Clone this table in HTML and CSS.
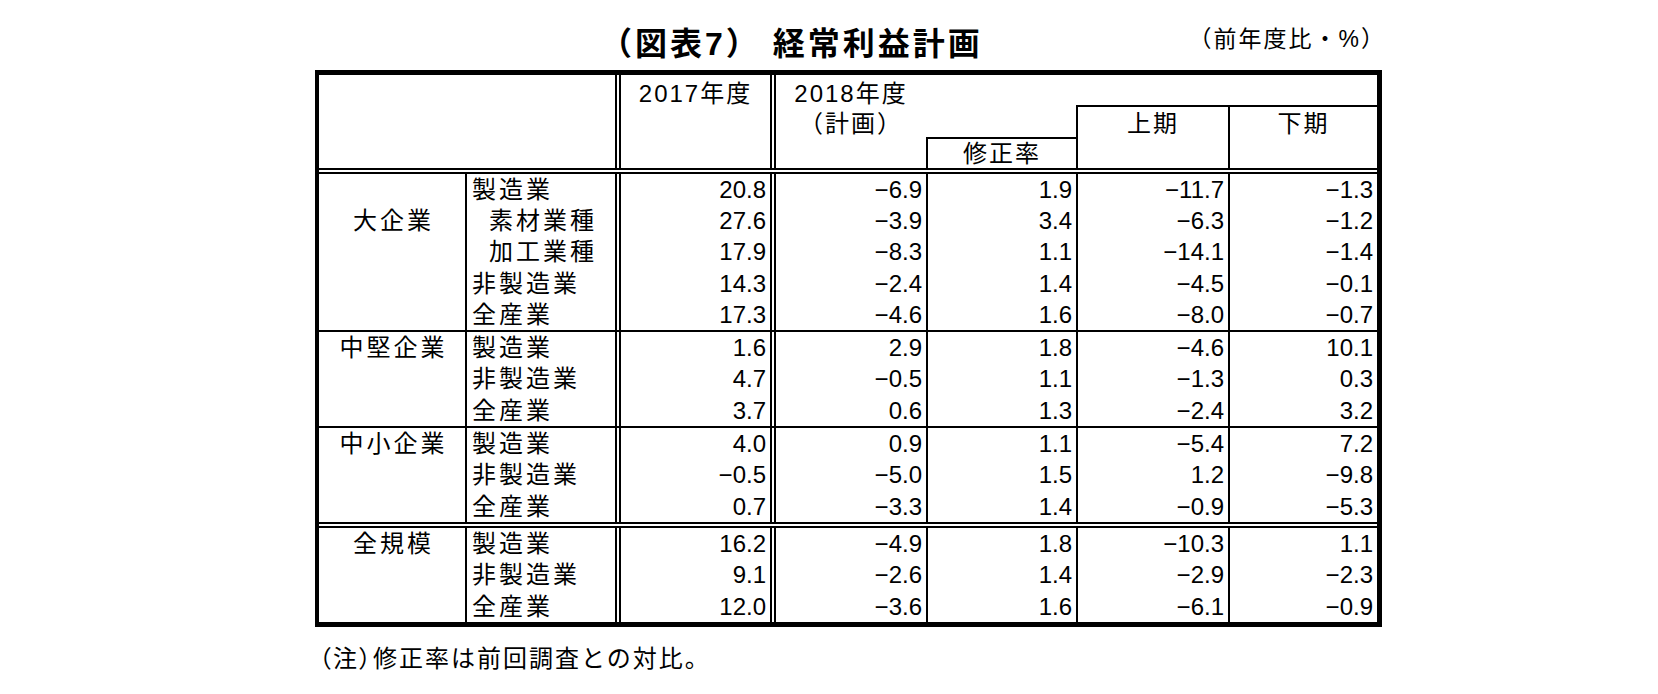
FILE: index.html
```html
<!DOCTYPE html>
<html lang="ja">
<head>
<meta charset="utf-8">
<title>経常利益計画</title>
<link rel="stylesheet" href="styles.css">
</head>
<body>
<div class="page">
  <div class="head">
    <div class="title">（図表7） 経常利益計画</div>
    <div class="unit">（前年度比・%）</div>
  </div>
  <div class="tbl">
    <div class="hd">
      <div class="tl"></div>
      <div class="y17">2017年度</div>
      <div class="y18"><div>2018年度</div><div>（計画）</div></div>
      <div class="rev">修正率</div>
      <div class="h1">上期</div>
      <div class="h2">下期</div>
    </div>

    <div class="row gd"><div class="g"></div><div class="s">製造業</div><div class="n">20.8</div><div class="n">−6.9</div><div class="n">1.9</div><div class="n">−11.7</div><div class="n">−1.3</div></div>
    <div class="row"><div class="g">大企業</div><div class="s in">素材業種</div><div class="n">27.6</div><div class="n">−3.9</div><div class="n">3.4</div><div class="n">−6.3</div><div class="n">−1.2</div></div>
    <div class="row"><div class="g"></div><div class="s in">加工業種</div><div class="n">17.9</div><div class="n">−8.3</div><div class="n">1.1</div><div class="n">−14.1</div><div class="n">−1.4</div></div>
    <div class="row"><div class="g"></div><div class="s">非製造業</div><div class="n">14.3</div><div class="n">−2.4</div><div class="n">1.4</div><div class="n">−4.5</div><div class="n">−0.1</div></div>
    <div class="row"><div class="g"></div><div class="s">全産業</div><div class="n">17.3</div><div class="n">−4.6</div><div class="n">1.6</div><div class="n">−8.0</div><div class="n">−0.7</div></div>

    <div class="row gs"><div class="g">中堅企業</div><div class="s">製造業</div><div class="n">1.6</div><div class="n">2.9</div><div class="n">1.8</div><div class="n">−4.6</div><div class="n">10.1</div></div>
    <div class="row"><div class="g"></div><div class="s">非製造業</div><div class="n">4.7</div><div class="n">−0.5</div><div class="n">1.1</div><div class="n">−1.3</div><div class="n">0.3</div></div>
    <div class="row"><div class="g"></div><div class="s">全産業</div><div class="n">3.7</div><div class="n">0.6</div><div class="n">1.3</div><div class="n">−2.4</div><div class="n">3.2</div></div>

    <div class="row gs"><div class="g">中小企業</div><div class="s">製造業</div><div class="n">4.0</div><div class="n">0.9</div><div class="n">1.1</div><div class="n">−5.4</div><div class="n">7.2</div></div>
    <div class="row"><div class="g"></div><div class="s">非製造業</div><div class="n">−0.5</div><div class="n">−5.0</div><div class="n">1.5</div><div class="n">1.2</div><div class="n">−9.8</div></div>
    <div class="row"><div class="g"></div><div class="s">全産業</div><div class="n">0.7</div><div class="n">−3.3</div><div class="n">1.4</div><div class="n">−0.9</div><div class="n">−5.3</div></div>

    <div class="row gd"><div class="g">全規模</div><div class="s">製造業</div><div class="n">16.2</div><div class="n">−4.9</div><div class="n">1.8</div><div class="n">−10.3</div><div class="n">1.1</div></div>
    <div class="row"><div class="g"></div><div class="s">非製造業</div><div class="n">9.1</div><div class="n">−2.6</div><div class="n">1.4</div><div class="n">−2.9</div><div class="n">−2.3</div></div>
    <div class="row"><div class="g"></div><div class="s">全産業</div><div class="n">12.0</div><div class="n">−3.6</div><div class="n">1.6</div><div class="n">−6.1</div><div class="n">−0.9</div></div>
  </div>
  <div class="note"><span class="pp">（</span>注<span class="pp">）</span>修正率は前回調査との対比。</div>
</div>
</body>
</html>
```

FILE: styles.css
```css
html, body {
  margin: 0;
  padding: 0;
  background: #fff;
}
body {
  font-family: "Liberation Sans", "Noto Sans CJK JP", sans-serif;
  font-size: 24px;
  color: #000;
}
.page {
  width: 1067px;
  margin-left: 315px;
}
.head {
  display: flex;
  align-items: flex-start;
  height: 70px;
}
.title {
  margin-left: 285px;
  margin-top: 28px;
  font-size: 32px;
  line-height: 32px;
  font-weight: bold;
  letter-spacing: 3px;
  white-space: pre;
}
.unit {
  margin-left: auto;
  margin-right: -4px;
  margin-top: 26px;
  font-size: 23px;
  line-height: 26px;
  letter-spacing: 2px;
}
.tbl {
  border-style: solid;
  border-color: #000;
  border-width: 5px 5px 5px 4px;
}
.hd, .row {
  display: grid;
  grid-template-columns: 146px 150px 155px 156px 150px 152px 149px;
}
.hd {
  grid-template-rows: 30px 32px 31px;
}
.hd > div {
  box-sizing: border-box;
  text-align: center;
  line-height: 29.6px;
  letter-spacing: 2px;
}
.tl { grid-column: 1 / 3; grid-row: 1 / 4; }
.y17 { grid-column: 3; grid-row: 1 / 4; border-left: 6px double #000; padding-top: 4px; }
.y18 { grid-column: 4; grid-row: 1 / 4; border-left: 6px double #000; padding-top: 4px; }
.rev { grid-column: 5; grid-row: 3; border-top: 2px solid #000; border-left: 2px solid #000; }
.h1 { grid-column: 6; grid-row: 2 / 4; border-top: 2px solid #000; border-left: 2px solid #000; padding-top: 2px; }
.h2 { grid-column: 7; grid-row: 2 / 4; border-top: 2px solid #000; border-left: 2px solid #000; padding-top: 2px; }

.row {
  height: 31.3px;
}
.row.gs { border-top: 2px solid #000; }
.row.gd { border-top: 6px double #000; }
.row > div {
  box-sizing: border-box;
  display: flex;
  align-items: center;
  line-height: 30px;
}
.row > div:nth-child(2) { border-left: 2px solid #000; }
.row > div:nth-child(3),
.row > div:nth-child(4) { border-left: 6px double #000; }
.row > div:nth-child(n+5) { border-left: 2px solid #000; }
.g {
  justify-content: center;
  letter-spacing: 3px;
  padding-left: 3px;
}
.s {
  padding-left: 5px;
  letter-spacing: 3px;
}
.s.in { padding-left: 22px; }
.n {
  justify-content: flex-end;
  padding-right: 4px;
}
.note {
  margin-left: 4px;
  margin-top: 17px;
  line-height: 30px;
  letter-spacing: 2px;
}
.pp {
  font-feature-settings: "palt" 1;
}
```
